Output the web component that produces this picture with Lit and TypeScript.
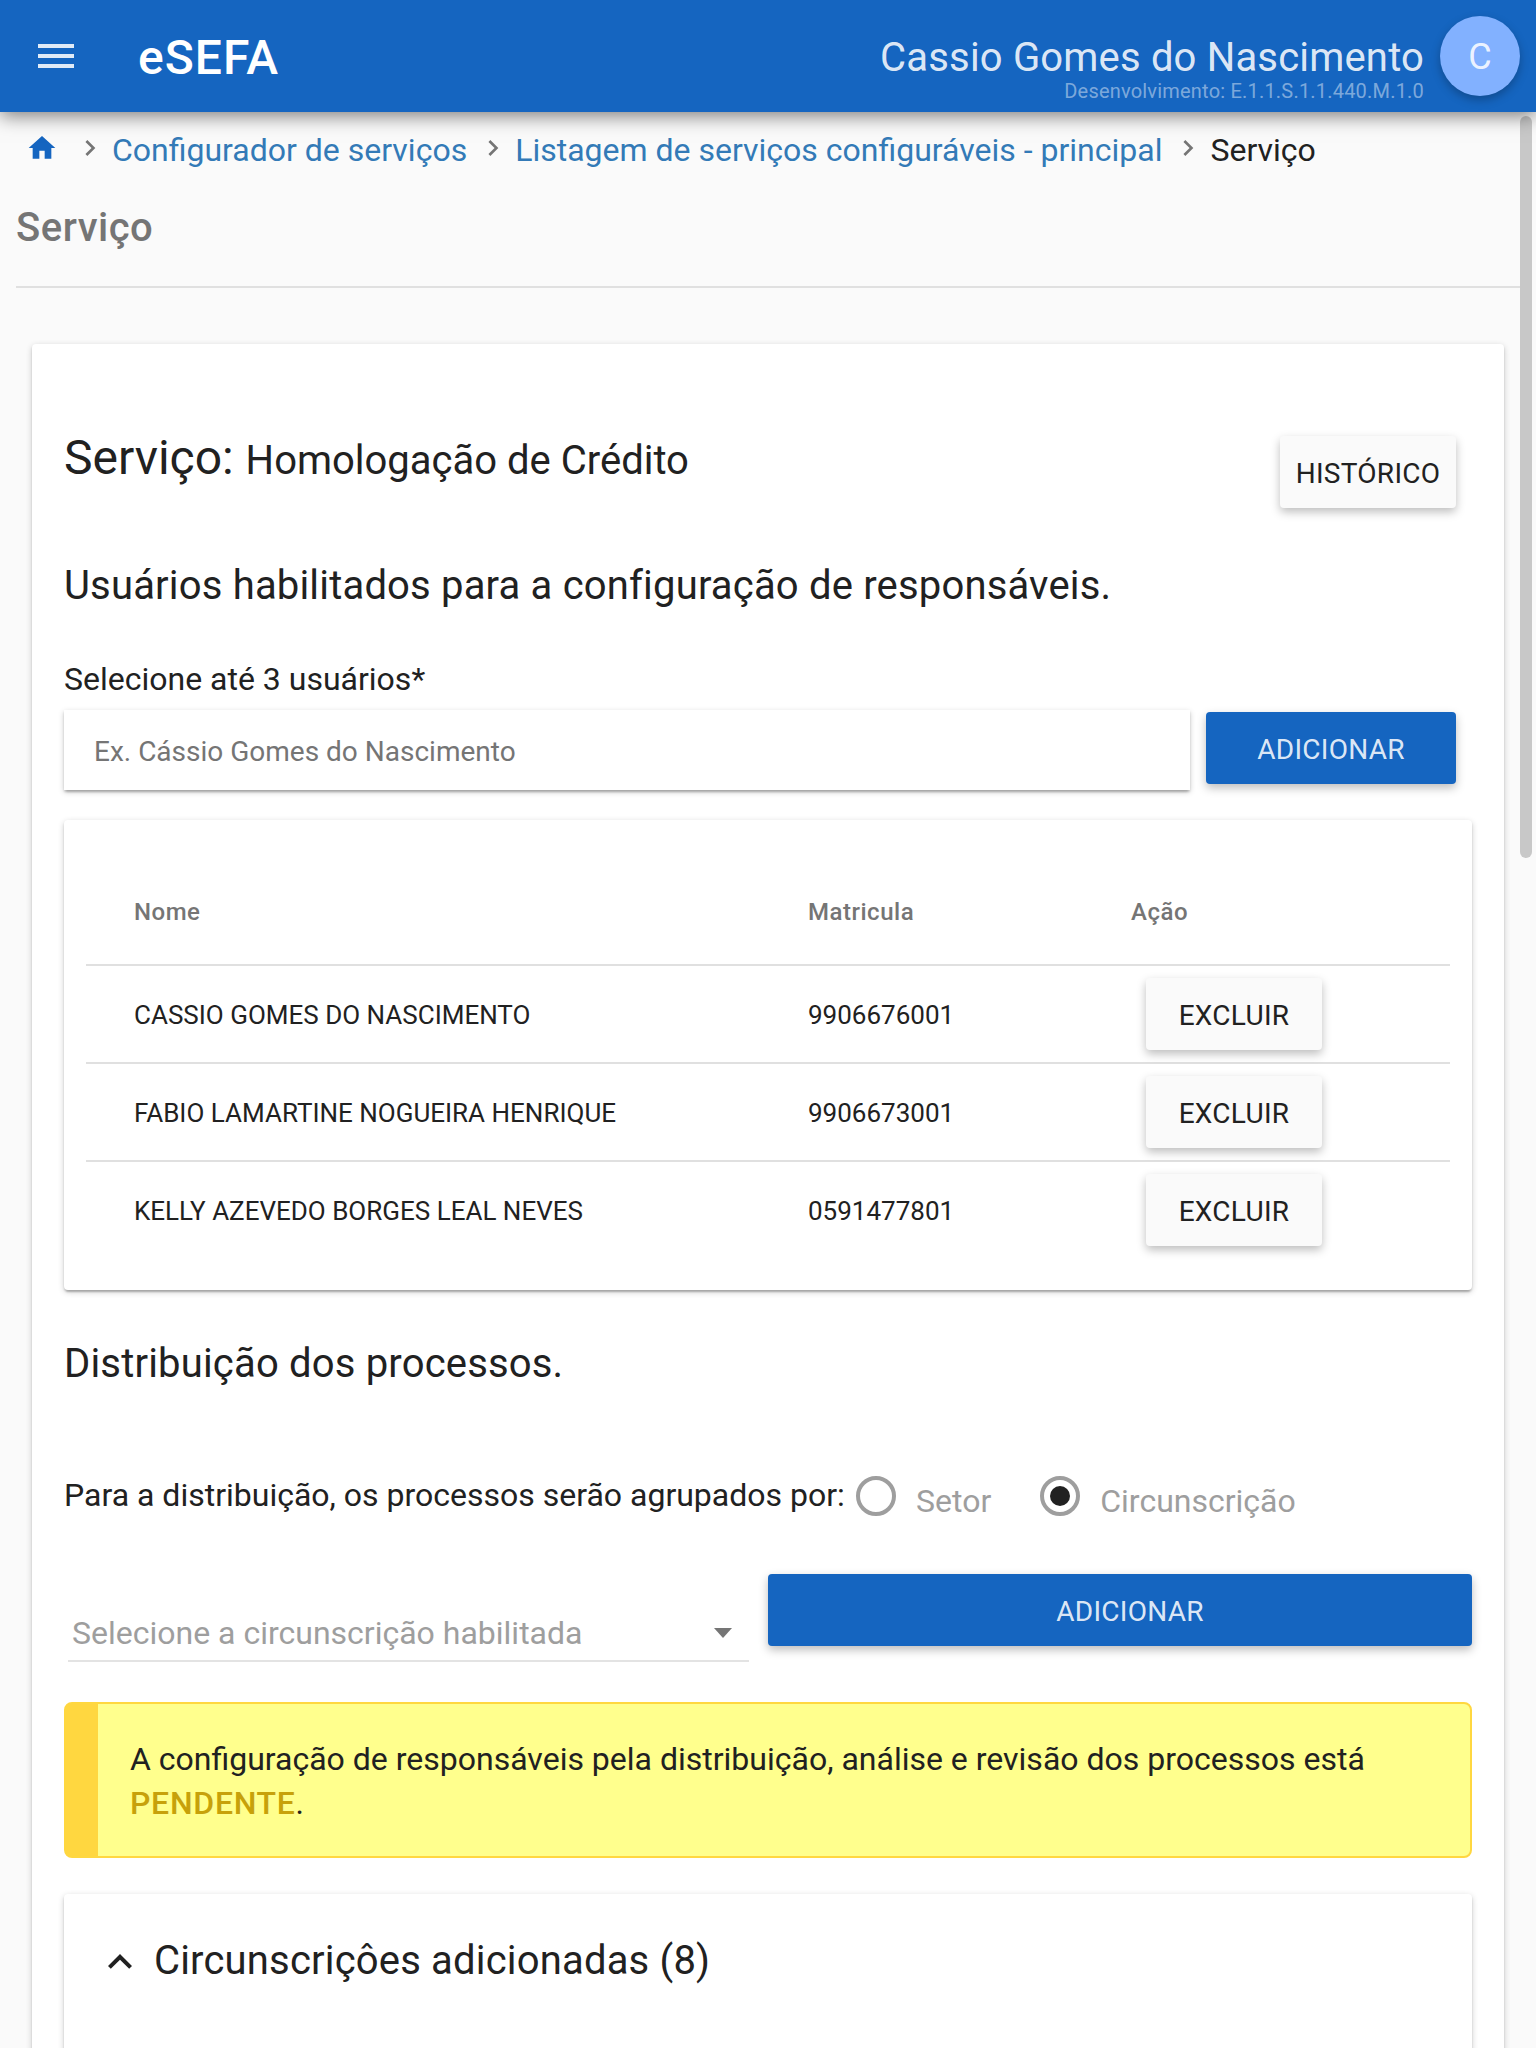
import { LitElement, html, css, svg } from "lit";
import { customElement, state } from "lit/decorators.js";

interface Usuario {
  nome: string;
  matricula: string;
}

const ICONS = {
  menu: "M3 18h18v-2H3v2zm0-5h18v-2H3v2zm0-7v2h18V6H3z",
  home: "M10 20v-6h4v6h5v-8h3L12 3 2 12h3v8z",
  right: "M10 6L8.59 7.41 13.17 12l-4.58 4.59L10 18l6-6z",
  up: "M12 8l-6 6 1.41 1.41L12 10.83l4.59 4.58L18 14z",
};

const icon = (name: keyof typeof ICONS, cls: string) =>
  html`<svg class="icon ${cls}" viewBox="0 0 24 24" aria-hidden="true">${svg`<path d=${ICONS[name]}></path>`}</svg>`;

@customElement("app-root")
export class AppRoot extends LitElement {
  @state() private agrupamento = "Circunscrição";

  private usuarios: Usuario[] = [
    { nome: "CASSIO GOMES DO NASCIMENTO", matricula: "9906676001" },
    { nome: "FABIO LAMARTINE NOGUEIRA HENRIQUE", matricula: "9906673001" },
    { nome: "KELLY AZEVEDO BORGES LEAL NEVES", matricula: "0591477801" },
  ];

  static styles = css`
    :host {
      display: flex;
      flex-direction: column;
      height: 2048px;
      overflow: hidden;
      background: #fafafa;
      color: #212121;
      font-family: Roboto, "Liberation Sans", sans-serif;
      font-size: 32px;
      box-sizing: border-box;
    }
    * { box-sizing: border-box; }
    h1, h2, p { margin: 0; font-weight: 400; }
    .icon { display: block; flex: none; fill: currentColor; }

    .bar {
      flex: none;
      display: flex;
      height: 112px;
      padding: 0 16px 0 32px;
      background: #1565c0;
      color: rgba(255, 255, 255, 0.87);
      box-shadow: 0 4px 18px rgba(0, 0, 0, 0.5);
      z-index: 1;
    }
    .menu { width: 48px; height: 48px; margin-top: 32px; }
    .brand {
      margin: 30px 0 0 58px;
      font-size: 48px;
      line-height: 56px;
      font-weight: 500;
      letter-spacing: 1px;
      color: #fff;
    }
    .who { margin: 34px 16px 0 auto; text-align: right; }
    .who-name { font-size: 40px; line-height: 48px; letter-spacing: 0.18px; }
    .who-env {
      font-size: 20px;
      line-height: 18px;
      letter-spacing: 0.2px;
      color: rgba(255, 255, 255, 0.46);
    }
    .avatar {
      width: 80px;
      height: 80px;
      margin-top: 16px;
      border-radius: 50%;
      background: #82b1ff;
      font-size: 36px;
      line-height: 83px;
      text-align: center;
      box-shadow: 0 4px 10px rgba(0, 0, 0, 0.26);
    }

    .body { flex: 1; min-height: 0; display: flex; }
    .content { width: 1520px; }
    .rail { width: 16px; padding-top: 4px; }
    .thumb { width: 12px; height: 742px; border-radius: 6px; background: #c8c8c8; }

    .crumbs {
      display: flex;
      align-items: center;
      height: 78px;
      padding-left: 26px;
      color: #212121;
    }
    .crumbs .icon { width: 32px; height: 32px; margin-bottom: 6px; }
    .crumbs span { line-height: 38px; margin-bottom: 2px; }
    .home { color: #1565c0; }
    .sep { color: #757575; margin: 0 6px 0 10px; }
    .home + .sep { margin: 0 6px 6px 16px; }
    .link { color: #337ab7; }
    .title {
      margin: 14px 0 0 16px;
      padding-bottom: 34px;
      border-bottom: 2px solid #e0e0e0;
      font-size: 40px;
      line-height: 48px;
      font-weight: 500;
      letter-spacing: 0.5px;
      color: #757575;
    }

    .card {
      background: #fff;
      border-radius: 4px;
      box-shadow: 0 2px 6px rgba(0, 0, 0, 0.2), 0 2px 2px rgba(0, 0, 0, 0.14),
        0 4px 2px -2px rgba(0, 0, 0, 0.12);
    }
    .main { height: 1800px; margin: 56px 16px 0 32px; padding: 86px 32px 0; }
    .btn {
      display: block;
      height: 72px;
      padding: 4px 0 0;
      border: 0;
      border-radius: 4px;
      background: #fafafa;
      color: #212121;
      font: 400 28px/68px Roboto, "Liberation Sans", sans-serif;
      letter-spacing: 0.28px;
      text-align: center;
      text-transform: uppercase;
      box-shadow: 0 4px 10px rgba(0, 0, 0, 0.26);
    }
    .primary { background: #1565c0; color: rgba(255, 255, 255, 0.87); }
    .small { width: 176px; }

    .head { display: flex; justify-content: space-between; padding-right: 16px; height: 78px; }
    .service { font-size: 48px; line-height: 56px; }
    .service-name { font-size: 40px; }
    .head .btn { margin-top: 6px; }
    .section { font-size: 40px; line-height: 48px; letter-spacing: 0.18px; margin-top: 54px; }
    .label { line-height: 40px; margin-top: 49px; }
    .pick { display: flex; gap: 16px; margin-top: 11px; padding-right: 16px; }
    .field {
      flex: 1;
      height: 80px;
      padding-left: 30px;
      border-radius: 0;
      font-size: 28px;
      line-height: 84px;
      color: #757575;
    }
    .pick .btn { width: 250px; margin-top: 2px; }

    .users { margin-top: 30px; padding: 32px 22px; }
    .row {
      display: grid;
      grid-template-columns: 674px 323px 1fr;
      align-items: center;
      height: 98px;
      padding-left: 48px;
      border-top: 2px solid #e0e0e0;
      font-size: 26px;
    }
    .row span { padding-top: 2px; }
    .row.th {
      height: 112px;
      border-top: 0;
      padding-top: 6px;
      font-size: 24px;
      font-weight: 500;
      letter-spacing: 0.52px;
      color: #757575;
    }
    .row .btn { margin-left: 15px; }

    .dist { margin-top: 50px; }
    .group { display: flex; align-items: center; height: 40px; margin-top: 88px; }
    .group-label { width: 792px; margin-bottom: 2px; }
    .radio {
      display: flex;
      align-items: center;
      justify-content: center;
      width: 40px;
      height: 40px;
      border: 4px solid #9e9e9e;
      border-radius: 50%;
    }
    .radio.on::after {
      content: "";
      width: 20px;
      height: 20px;
      border-radius: 50%;
      background: #212121;
    }
    .radio-text { margin: 10px 49px 0 20px; color: #9e9e9e; }

    .choose { display: flex; justify-content: space-between; height: 88px; margin-top: 58px; }
    .select {
      display: flex;
      justify-content: space-between;
      align-items: center;
      width: 681px;
      height: 58px;
      margin: 30px 0 0 4px;
      padding: 2px 17px 0 4px;
      border-bottom: 2px solid #e3e3e3;
      color: #9e9e9e;
    }
    .caret {
      border: 9px solid transparent;
      border-top: 10px solid #757575;
      border-bottom: 0;
    }
    .choose .btn { width: 704px; padding-left: 20px; }

    .alert {
      height: 156px;
      margin-top: 40px;
      padding: 33px 32px;
      border: 2px solid #ffd740;
      border-left-width: 34px;
      border-radius: 8px;
      background: #ffff8d;
      line-height: 44px;
    }
    .pending { font-weight: 500; letter-spacing: 0.7px; color: #c7a10a; }

    .added { display: flex; height: 200px; margin-top: 36px; padding: 43px 32px 0; }
    .added .icon { width: 48px; height: 48px; margin-top: 1px; }
    .added .section { margin: 0 0 0 10px; }
  `;

  private radio(nome: string) {
    return html`
      <span
        class="radio ${this.agrupamento === nome ? "on" : ""}"
        role="radio"
        @click=${() => (this.agrupamento = nome)}
      ></span>
      <span class="radio-text">${nome}</span>
    `;
  }

  render() {
    return html`
      <header class="bar">
        ${icon("menu", "menu")}
        <div class="brand">eSEFA</div>
        <div class="who">
          <div class="who-name">Cassio Gomes do Nascimento</div>
          <div class="who-env">Desenvolvimento: E.1.1.S.1.1.440.M.1.0</div>
        </div>
        <div class="avatar">C</div>
      </header>
      <div class="body">
        <div class="content">
          <nav class="crumbs">
            ${icon("home", "home")}${icon("right", "sep")}
            <span class="link">Configurador de serviços</span>
            ${icon("right", "sep")}
            <span class="link">Listagem de serviços configuráveis - principal</span>
            ${icon("right", "sep")}
            <span>Serviço</span>
          </nav>
          <h1 class="title">Serviço</h1>
          <main class="card main">
            <div class="head">
              <p class="service">Serviço: <span class="service-name">Homologação de Crédito</span></p>
              <button class="btn small">Histórico</button>
            </div>
            <h2 class="section">Usuários habilitados para a configuração de responsáveis.</h2>
            <p class="label">Selecione até 3 usuários*</p>
            <div class="pick">
              <div class="card field">Ex. Cássio Gomes do Nascimento</div>
              <button class="btn primary">Adicionar</button>
            </div>
            <div class="card users">
              <div class="row th"><span>Nome</span><span>Matricula</span><span>Ação</span></div>
              ${this.usuarios.map(
                (u) => html`<div class="row">
                  <span>${u.nome}</span><span>${u.matricula}</span>
                  <button class="btn small">Excluir</button>
                </div>`
              )}
            </div>
            <h2 class="section dist">Distribuição dos processos.</h2>
            <div class="group">
              <span class="group-label">Para a distribuição, os processos serão agrupados por:</span>
              ${this.radio("Setor")}${this.radio("Circunscrição")}
            </div>
            <div class="choose">
              <div class="select"><span>Selecione a circunscrição habilitada</span><i class="caret"></i></div>
              <button class="btn primary">Adicionar</button>
            </div>
            <div class="alert">
              A configuração de responsáveis pela distribuição, análise e revisão dos processos está
              <span class="pending">PENDENTE</span>.
            </div>
            <div class="card added">
              ${icon("up", "")}
              <h2 class="section">Circunscriçôes adicionadas (8)</h2>
            </div>
          </main>
        </div>
        <div class="rail"><div class="thumb"></div></div>
      </div>
    `;
  }
}
